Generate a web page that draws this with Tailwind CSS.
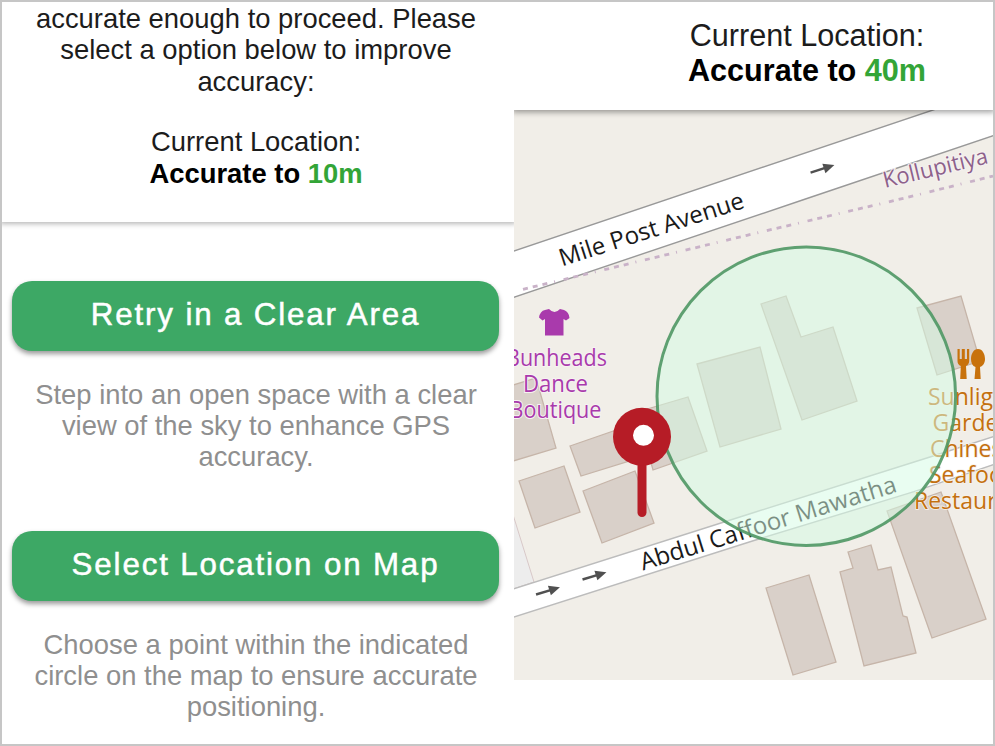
<!DOCTYPE html>
<html lang="en">
<head>
<meta charset="utf-8">
<title>Location accuracy</title>
<script src="https://cdn.jsdelivr.net/npm/@tailwindcss/browser@4"></script>
</head>
<body class="bg-white">
<div class="flex h-[746px] w-[995px] overflow-hidden border-2 border-[#c6c6c6] bg-white font-['Liberation_Sans',Arial,sans-serif] text-black">
  <section class="flex w-[512px] shrink-0 flex-col">
    <header class="h-[220px] shrink-0 pt-px text-center text-[27.4px] leading-[31.3px] text-[#1c1c1c] shadow-[0_0_5px_2px_rgba(0,0,0,0.28)] [clip-path:inset(0_0_-12px_0)]">
      <p class="whitespace-nowrap pr-1">accurate enough to proceed. Please<br>select a option below to improve<br>accuracy:</p>
      <p class="mt-[29.500px] pr-1">Current Location:<br><b class="text-black">Accurate to <span class="text-[#33a537]">10m</span></b></p>
    </header>
    <main class="flex flex-col px-[10px] pt-[59px] text-center">
      <button class="h-[70px] w-[487px] rounded-[20px] bg-[#3da865] pb-[2px] text-[31.3px] tracking-[1.85px] text-white shadow-[0_3px_5px_rgba(0,0,0,0.4)] [-webkit-text-stroke:0.5px_white]">Retry in a Clear Area</button>
      <p class="mt-[27.500px] whitespace-nowrap pr-1 text-[27.4px] leading-[31.3px] text-[#8f8f8f]">Step into an open space with a clear<br>view of the sky to enhance GPS<br>accuracy.</p>
      <button class="mt-[59px] h-[70px] w-[487px] rounded-[20px] bg-[#3da865] pb-[2px] text-[31.3px] tracking-[1.85px] text-white shadow-[0_3px_5px_rgba(0,0,0,0.4)] [-webkit-text-stroke:0.5px_white]">Select Location on Map</button>
      <p class="mt-[27.500px] whitespace-nowrap pr-1 text-[27.4px] leading-[31.3px] text-[#8f8f8f]">Choose a point within the indicated<br>circle on the map to ensure accurate<br>positioning.</p>
    </main>
  </section>
  <section class="flex w-[479px] shrink-0 flex-col">
    <header class="z-10 h-[108px] shrink-0 bg-white pl-[107px] pt-[16px] text-center text-[30.6px] leading-[35px] text-[#1c1c1c] shadow-[0_0_6px_2px_rgba(0,0,0,0.4)] [clip-path:inset(0_0_-12px_0)]">
      <p>Current Location:<br><b class="text-black">Accurate to <span class="text-[#33a537]">40m</span></b></p>
    </header>
    <svg class="block h-[570px] w-[479px] shrink-0 bg-[#f1eee8]" style="font-family:'Open Sans','Noto Sans',sans-serif" viewBox="514 110 479 570">
      <defs>
        <g id="arrow"><path d="M-12 0H5" stroke="#505050" stroke-width="2.4"/><path d="M2 -5L13 0L2 5Z" fill="#505050"/></g>
      </defs>
      <!-- land -->
      <path d="M510 505L534 582L510 590Z" fill="#ededed" stroke="#d8c8c8"/>
      <!-- roads -->
      <path d="M510 252.3L934 110L993 88V136L804 199.5L510 298.5Z" fill="#fff"/>
      <path d="M510 252.3L936 109M510 298.5L804 199.5L997 134.5" fill="none" stroke="#999" stroke-width="1.4"/>
      <path d="M510 590L754 512.5L930 457L997 435.5V463.5L914 491.7L754 540.5L510 618.2Z" fill="#fff" stroke="#bcbcbc" stroke-width="1.4"/>
      <!-- boundary -->
      <path d="M523 289.3L747 235.3L907 197.5L993 176" fill="none" stroke="#c9b2c8" stroke-width="2.8" stroke-dasharray="5 5 5 5 5 7 1 8.8"/>
      <!-- buildings -->
      <g fill="#d9d0c9" stroke="#c6b5a9" stroke-width="1.3">
        <path d="M510 386L536 378L556 448L510 462Z"/>
        <path d="M570 446L625 427L642 457L581 476Z"/>
        <path d="M519 481L564 466L580 512L535 528Z"/>
        <path d="M583 491L635 471L654 523L602 543Z"/>
        <path d="M637 412L688 397L707 451L653 470Z"/>
        <path d="M697 364L760 347L781 429L720 447Z"/>
        <path d="M761 304L786 296L801 337L833 327L857 401L802 420Z"/>
        <path d="M917 308L961 296L980 361L937 375Z"/>
        <path d="M766 588L809 575L836 662L793 675Z"/>
        <path d="M848 552L871 545L878 570L891 567L903 616L907 617L916 653L864 666L840 572L853 568Z"/>
        <path d="M887 511L941 492L986 619L932 638Z"/>
      </g>
      <!-- road direction -->
      <use href="#arrow" transform="translate(822,169) rotate(-18)"/>
      <use href="#arrow" transform="translate(547.500,591) rotate(-17)"/>
      <use href="#arrow" transform="translate(594,576) rotate(-17)"/>
      <!-- labels -->
      <g fill="#1a1a1a" font-size="24" stroke="#fff" stroke-width="2" paint-order="stroke">
        <text transform="translate(562,266.500) rotate(-17.800)" textLength="193" lengthAdjust="spacingAndGlyphs">Mile Post Avenue</text>
        <text transform="translate(643,570.500) rotate(-17.200)" textLength="267" lengthAdjust="spacingAndGlyphs">Abdul Caffoor Mawatha</text>
      </g>
      <text transform="translate(885,188) rotate(-13.500)" font-size="22.500" fill="#8d618b" stroke="#f6f1f1" stroke-width="2" paint-order="stroke" textLength="107" lengthAdjust="spacingAndGlyphs">Kollupitiya</text>
      <g fill="#a93aac" font-size="23" stroke="#f7f2f2" stroke-width="2" paint-order="stroke" text-anchor="middle">
        <text x="556.500" y="366" textLength="101" lengthAdjust="spacingAndGlyphs">Bunheads</text>
        <text x="555.500" y="392" textLength="65" lengthAdjust="spacingAndGlyphs">Dance</text>
        <text x="555.500" y="418" textLength="92" lengthAdjust="spacingAndGlyphs">Boutique</text>
      </g>
      <path d="M545 310L549 309Q554.500 315 560 309L564 310Q569 312 569.500 318L566 320.500L563.500 319V335.500H545V319L542.500 320.500L539 317.500Q540 311 545 310Z" fill="#a93aac"/>
      <g fill="#c4700f" font-size="23" stroke="#f7f2ea" stroke-width="1.500" paint-order="stroke">
        <text x="928" y="405">Sunlight</text>
        <text x="932.500" y="431">Garden</text>
        <text x="930" y="457">Chinese</text>
        <text x="929" y="483">Seafood</text>
        <text x="914" y="509">Restaurant</text>
      </g>
      <path d="M957.500 349H959.700V359H961.800V349H964.800V359H967V349H969.200V361Q969 364.500 966 366L966.700 379H960.200L960.800 366Q957.500 364.500 957.500 361Z" fill="#c8720c"/>
      <path d="M978 349C982.500 349 985 354 985 359C985 363 983 366 980 367L980.700 379H974.500L975.500 367C972.500 366 971 363 971 359C971 354 973.500 349 978 349Z" fill="#c8720c"/>
      <!-- accuracy circle -->
      <circle cx="806.300" cy="396.200" r="149.300" fill="#d4fce5" fill-opacity="0.520" stroke="#4f9764" stroke-opacity="0.900" stroke-width="3"/>
      <!-- pin -->
      <path d="M642 460V512.500" stroke="#b61c26" stroke-width="9" stroke-linecap="round"/>
      <circle cx="642" cy="436.700" r="29" fill="#b61c26"/>
      <circle cx="643.500" cy="435.300" r="10.500" fill="#fff"/>
    </svg>
  </section>
</div>
</body>
</html>
